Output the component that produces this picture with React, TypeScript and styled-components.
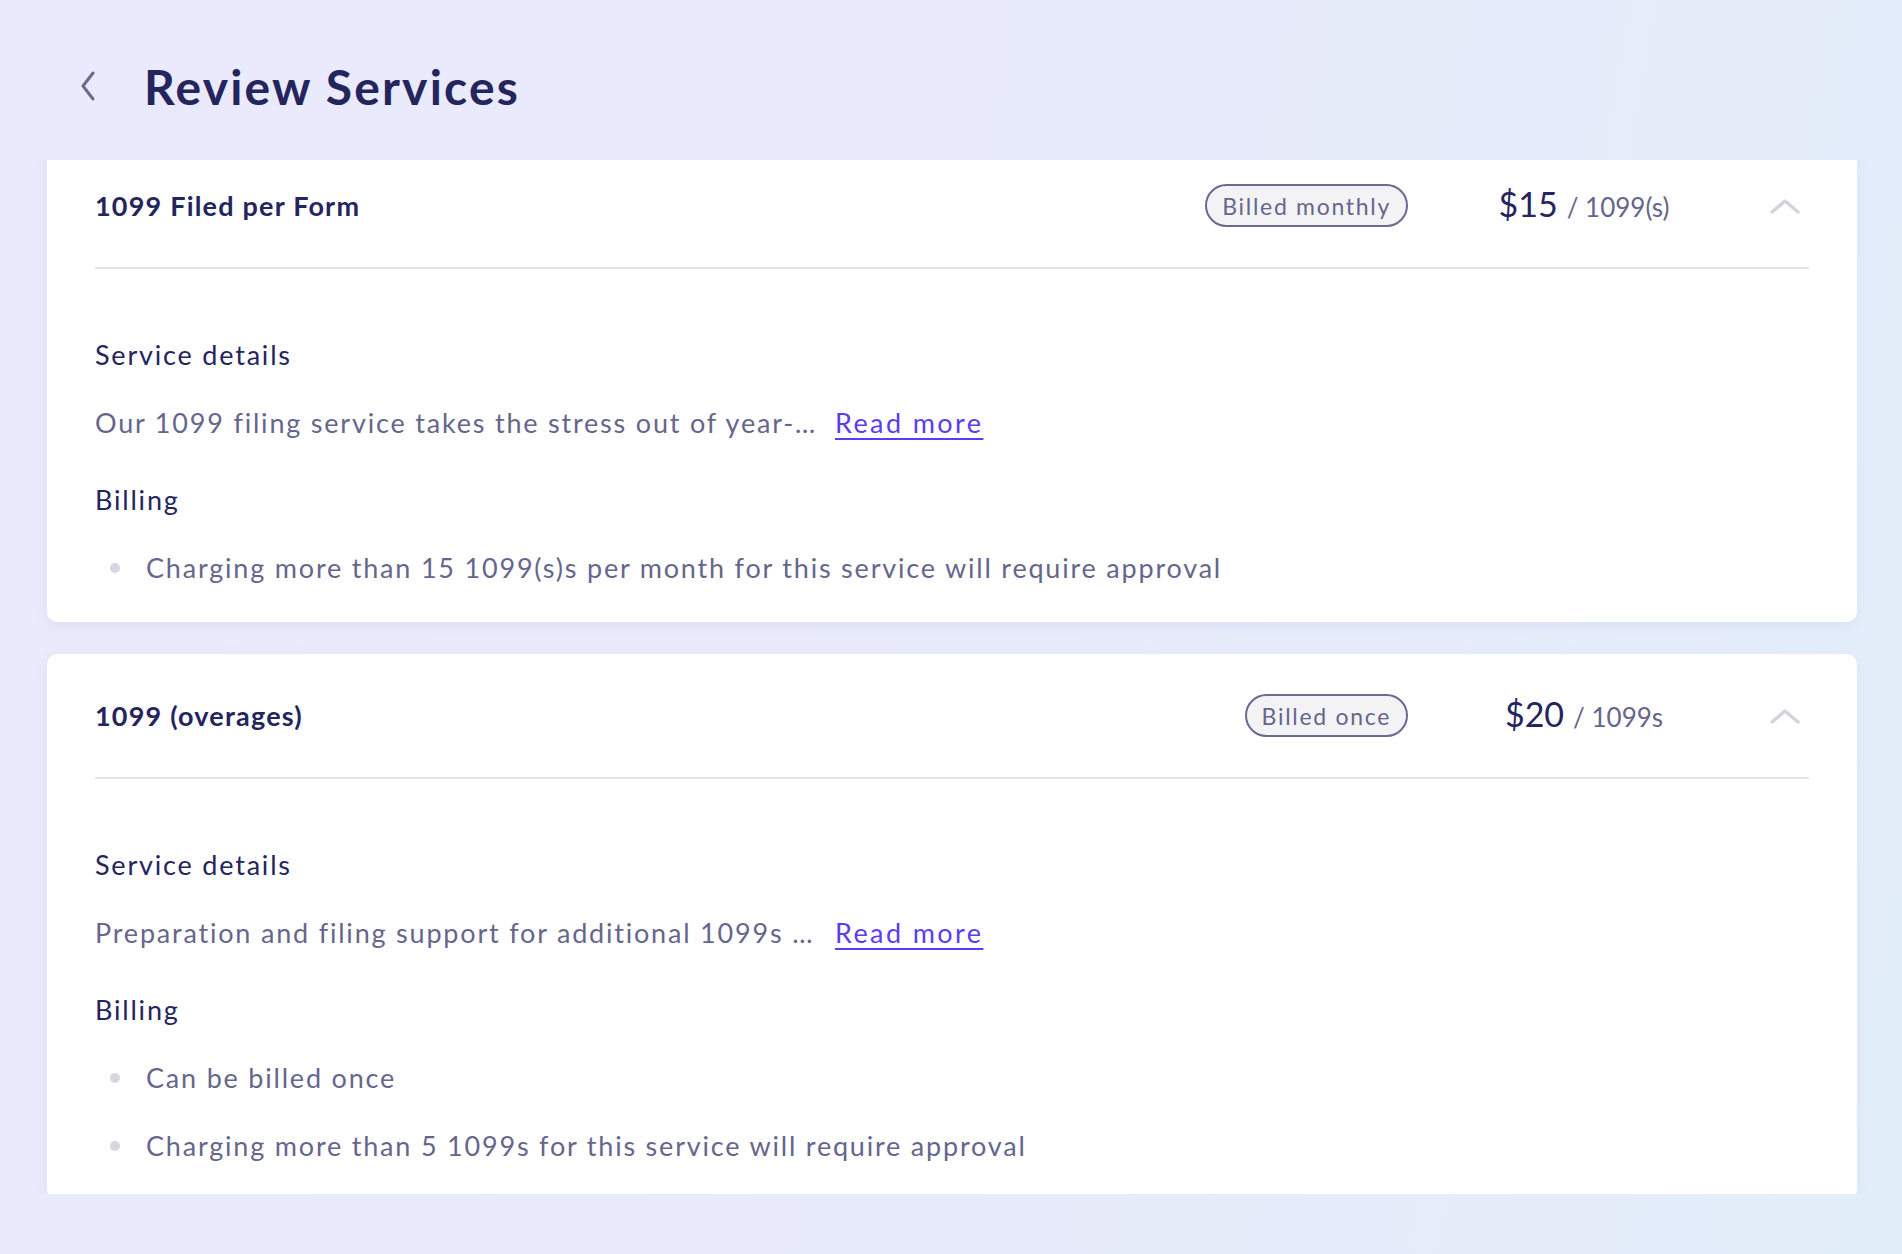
import React, { useLayoutEffect, useRef } from "react";
import styled, { createGlobalStyle } from "styled-components";

const GlobalStyle = createGlobalStyle`
  html, body {
    margin: 0;
    padding: 0;
  }
  body {
    font-family: "Lato", "Open Sans", "Liberation Sans", sans-serif;
    background: linear-gradient(100deg, #eaeafc 0%, #e8ebfb 55%, #e3eefb 100%);
    min-height: 100vh;
    -webkit-font-smoothing: antialiased;
  }
  * { box-sizing: border-box; }
`;

const Page = styled.div`
  width: 1902px;
  height: 1254px;
  display: flex;
  flex-direction: column;
  overflow: hidden;
`;

const Header = styled.header`
  height: 160px;
  display: flex;
  align-items: center;
  padding: 12px 0 0 80px;
`;

const BackButton = styled.button`
  width: 64px;
  height: 40px;
  padding: 0;
  border: none;
  background: none;
  display: flex;
  align-items: center;
  cursor: pointer;
  color: #6b6b8f;
`;

const Title = styled.h1`
  margin: 0;
  font-size: 48px;
  font-weight: 700;
  color: #25255e;
  letter-spacing: 2.2px;
`;

const Viewport = styled.div`
  height: 1034px;
  overflow: hidden;
  padding: 0 45px 0 47px;
`;

const List = styled.div`
  display: flex;
  flex-direction: column;
  gap: 32px;
  padding-bottom: 40px;
`;

const Card = styled.section`
  background: #ffffff;
  border-radius: 10px;
  padding: 0 48px;
  box-shadow: 0 4px 14px rgba(90, 90, 160, 0.07);
`;

const CardHeader = styled.div`
  display: flex;
  align-items: center;
  padding: 40px 0;
  border-bottom: 2px solid #e3e3ea;
`;

const ServiceName = styled.h2`
  flex: 1;
  margin: 0;
  font-size: 27px;
  font-weight: 700;
  letter-spacing: 1.2px;
  color: #25255e;
`;

const Pill = styled.span`
  height: 43px;
  display: inline-flex;
  align-items: center;
  padding: 0 15px;
  border: 2px solid #6a6a92;
  border-radius: 22px;
  background: #f3f3f6;
  color: #66668c;
  font-size: 23px;
  letter-spacing: 1.7px;
  white-space: nowrap;
`;

const Price = styled.div`
  width: 256px;
  margin-left: 48px;
  display: flex;
  justify-content: center;
  align-items: baseline;
  gap: 9px;
  white-space: nowrap;
`;

const Amount = styled.span`
  font-size: 34px;
  line-height: 34px;
  color: #25255e;
`;

const Unit = styled.span`
  font-size: 26px;
  line-height: 34px;
  color: #66668c;
`;

const ToggleButton = styled.button`
  width: 48px;
  height: 40px;
  margin-left: 49px;
  padding: 0;
  border: none;
  background: none;
  display: flex;
  align-items: center;
  justify-content: center;
  cursor: pointer;
`;

const CardBody = styled.div`
  display: flex;
  flex-direction: column;
  gap: 41px;
  padding: 68px 0 36px;
`;

const Section = styled.div`
  display: flex;
  flex-direction: column;
  gap: 32px;
`;

const SectionTitle = styled.h3`
  margin: 0;
  font-size: 27px;
  line-height: 36px;
  font-weight: 400;
  letter-spacing: 1.8px;
  color: #25255e;
`;

const DescriptionRow = styled.div`
  display: flex;
  align-items: center;
  gap: 14px;
  line-height: 36px;
  font-size: 27px;
  letter-spacing: 1.8px;
`;

const Description = styled.span`
  width: 726px;
  color: #66668c;
  white-space: nowrap;
  overflow: hidden;
  text-overflow: ellipsis;
`;

const ReadMore = styled.a`
  color: #5b3cf2;
  letter-spacing: 2.4px;
  text-decoration: underline;
  text-decoration-thickness: 2px;
  text-underline-offset: 5px;
  cursor: pointer;
  white-space: nowrap;
`;

const Bullets = styled.ul`
  margin: 0;
  padding: 0;
  list-style: none;
  display: flex;
  flex-direction: column;
  gap: 32px;
`;

const Bullet = styled.li`
  position: relative;
  padding-left: 51px;
  font-size: 27px;
  line-height: 36px;
  letter-spacing: 1.8px;
  color: #66668c;

  &::before {
    content: "";
    position: absolute;
    left: 15px;
    top: 13px;
    width: 10px;
    height: 10px;
    border-radius: 50%;
    background: #d6d6e0;
  }
`;

const ChevronLeft = () => (
  <svg width="16" height="30" viewBox="0 0 16 30" fill="none">
    <path d="M13 2 L3 15 L13 28" stroke="currentColor" strokeWidth="3" strokeLinecap="round" strokeLinejoin="round" />
  </svg>
);

const ChevronUp = () => (
  <svg width="30" height="16" viewBox="0 0 30 16" fill="none">
    <path d="M2 14 L15 3 L28 14" stroke="#d3d3dc" strokeWidth="3.4" strokeLinecap="round" strokeLinejoin="round" />
  </svg>
);

type Service = {
  name: string;
  billing: string;
  amount: string;
  unit: string;
  description: string;
  rules: string[];
};

const services: Service[] = [
  {
    name: "1099 Filed per Form",
    billing: "Billed monthly",
    amount: "$15",
    unit: "/ 1099(s)",
    description: "Our 1099 filing service takes the stress out of year-…",
    rules: ["Charging more than 15 1099(s)s per month for this service will require approval"],
  },
  {
    name: "1099 (overages)",
    billing: "Billed once",
    amount: "$20",
    unit: "/ 1099s",
    description: "Preparation and filing support for additional 1099s …",
    rules: ["Can be billed once", "Charging more than 5 1099s for this service will require approval"],
  },
];

const ServiceCard = ({ service }: { service: Service }) => (
  <Card>
    <CardHeader>
      <ServiceName>{service.name}</ServiceName>
      <Pill>{service.billing}</Pill>
      <Price>
        <Amount>{service.amount}</Amount>
        <Unit>{service.unit}</Unit>
      </Price>
      <ToggleButton aria-label="Collapse">
        <ChevronUp />
      </ToggleButton>
    </CardHeader>
    <CardBody>
      <Section>
        <SectionTitle>Service details</SectionTitle>
        <DescriptionRow>
          <Description>{service.description}</Description>
          <ReadMore>Read more</ReadMore>
        </DescriptionRow>
      </Section>
      <Section>
        <SectionTitle>Billing</SectionTitle>
        <Bullets>
          {service.rules.map((r) => (
            <Bullet key={r}>{r}</Bullet>
          ))}
        </Bullets>
      </Section>
    </CardBody>
  </Card>
);

export default function App() {
  const viewportRef = useRef<HTMLDivElement>(null);
  useLayoutEffect(() => {
    if (viewportRef.current) viewportRef.current.scrollTop = 16;
  }, []);

  return (
    <>
      <GlobalStyle />
      <Page>
        <Header>
          <BackButton aria-label="Back">
            <ChevronLeft />
          </BackButton>
          <Title>Review Services</Title>
        </Header>
        <Viewport ref={viewportRef}>
          <List>
            {services.map((s) => (
              <ServiceCard key={s.name} service={s} />
            ))}
          </List>
        </Viewport>
      </Page>
    </>
  );
}
